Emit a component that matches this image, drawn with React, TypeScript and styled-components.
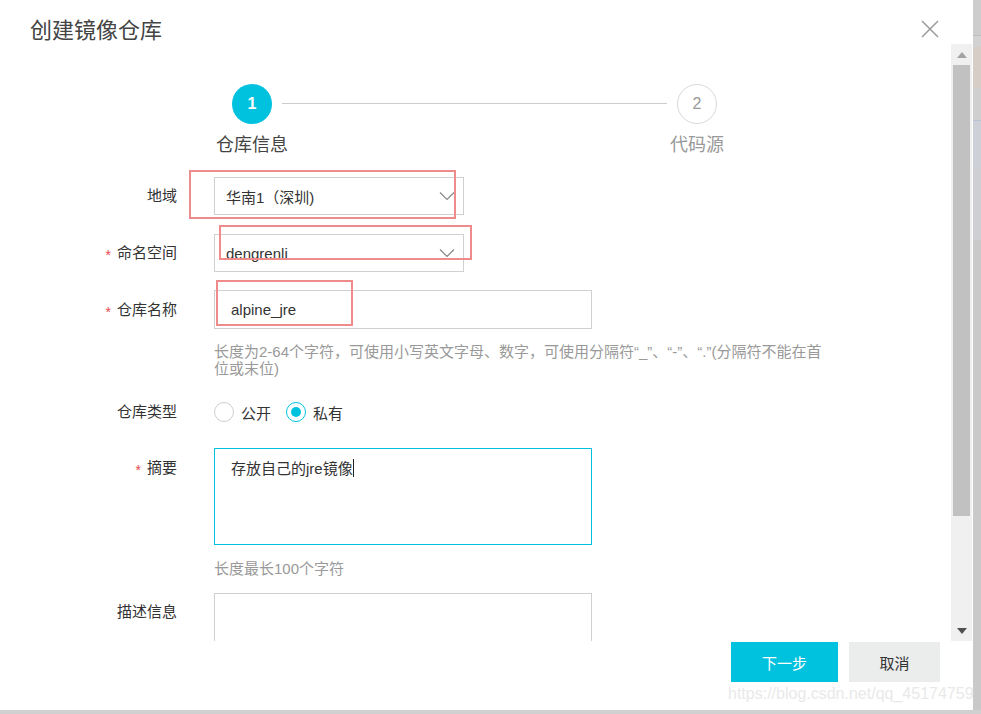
import React from "react";
import styled, { createGlobalStyle } from "styled-components";

const Global = createGlobalStyle`
  html, body { margin: 0; padding: 0; overflow: hidden; }
  body { font-family: "Liberation Sans", "Noto Sans CJK SC", sans-serif; }
  * { box-sizing: border-box; }
`;

const CYAN = "#00c1de";
const FONT = `"Liberation Sans", "Noto Sans CJK SC", sans-serif`;

const Page = styled.div`
  width: 981px;
  height: 714px;
  display: flex;
  flex-direction: column;
  background: #d0d0d0;
`;

const TopRow = styled.div`
  display: flex;
  height: 710px;
`;

const BottomStrip = styled.div`
  height: 4px;
  background: #d0d0d0;
`;

const BgStrip = styled.div`
  width: 8px;
  display: flex;
  flex-direction: column;
  background: #c9c9c9;
`;

const BgBlock = styled.div<{ $h: number; $c: string; $border?: string }>`
  height: ${(p) => p.$h}px;
  background: ${(p) => p.$c};
  border-top: ${(p) => p.$border || "none"};
  flex-shrink: 0;
`;

const Dialog = styled.div`
  width: 973px;
  height: 710px;
  background: #fff;
  display: flex;
  flex-direction: column;
  position: relative;
  font-family: ${FONT};
`;

const Header = styled.div`
  height: 44px;
  padding: 16px 34px 0 30px;
  display: flex;
  justify-content: space-between;
  align-items: flex-start;
`;

const Title = styled.div`
  font-size: 22px;
  line-height: 30px;
  color: #444;
`;

const CloseBtn = styled.div`
  width: 18px;
  height: 18px;
  margin-top: 4px;
  display: flex;
`;

const Body = styled.div`
  flex: 1;
  display: flex;
  min-height: 0;
`;

const Content = styled.div`
  flex: 1;
  position: relative;
  overflow: hidden;
  padding-top: 40px;
`;

const Scrollbar = styled.div`
  width: 21px;
  margin-right: 1px;
  background: #f0f0f0;
  display: flex;
  flex-direction: column;
  align-items: center;
`;

const ArrowBox = styled.div`
  height: 21px;
  width: 100%;
  display: flex;
  align-items: center;
  justify-content: center;
`;

const Thumb = styled.div`
  width: 17px;
  height: 451px;
  background: #c1c1c1;
`;

const ScrollSpacer = styled.div`
  flex: 1;
`;

const Steps = styled.div`
  display: flex;
  align-items: flex-start;
  padding-left: 232px;
`;

const StepItem = styled.div`
  width: 40px;
  display: flex;
  flex-direction: column;
  align-items: center;
`;

const StepCircle = styled.div<{ $active?: boolean }>`
  width: 40px;
  height: 40px;
  border-radius: 50%;
  display: flex;
  align-items: center;
  justify-content: center;
  font-size: 16px;
  font-weight: ${(p) => (p.$active ? 700 : 400)};
  background: ${(p) => (p.$active ? CYAN : "#fff")};
  color: ${(p) => (p.$active ? "#fff" : "#999")};
  border: ${(p) => (p.$active ? "none" : "1px solid #d9d9d9")};
`;

const StepLabel = styled.div<{ $active?: boolean }>`
  margin-top: 9px;
  font-size: 18px;
  line-height: 24px;
  white-space: nowrap;
  color: ${(p) => (p.$active ? "#444" : "#999")};
`;

const Connector = styled.div`
  width: 385px;
  height: 1px;
  background: #cccccc;
  margin: 19px 10px 0;
`;

const Form = styled.div`
  margin-top: 20px;
  display: flex;
  flex-direction: column;
`;

const FormItem = styled.div<{ $mb: number; $top?: boolean }>`
  display: grid;
  grid-template-columns: 177px 1fr;
  column-gap: 37px;
  align-items: ${(p) => (p.$top ? "start" : "center")};
  margin-bottom: ${(p) => p.$mb}px;
`;

const Label = styled.div<{ $pt?: number }>`
  text-align: right;
  font-size: 15px;
  color: #333;
  line-height: 20px;
  padding-top: ${(p) => p.$pt || 0}px;
  white-space: nowrap;
`;

const Star = styled.span`
  color: #e5484d;
  margin-right: 6px;
  font-size: 14px;
  position: relative;
  top: 2px;
`;

const Field = styled.div`
  display: flex;
  flex-direction: column;
`;

const Select = styled.div`
  width: 250px;
  height: 38px;
  border: 1px solid #d0d0d0;
  display: flex;
  align-items: center;
  justify-content: space-between;
  padding: 0 8px 0 11px;
  font-size: 15px;
  color: #333;
`;

const Input = styled.div`
  width: 378px;
  height: 39px;
  border: 1px solid #d0d0d0;
  display: flex;
  align-items: center;
  padding: 0 16px;
  font-size: 15px;
  color: #333;
`;

const TextArea = styled.div<{ $focus?: boolean; $h: number }>`
  width: 378px;
  height: ${(p) => p.$h}px;
  border: 1px solid ${(p) => (p.$focus ? CYAN : "#d0d0d0")};
  padding: 10px 16px;
  font-size: 15px;
  line-height: 20px;
  color: #333;
`;

const Caret = styled.span`
  display: inline-block;
  width: 1px;
  height: 18px;
  background: #222;
  vertical-align: -3px;
`;

const Help = styled.div<{ $mt: number }>`
  margin-top: ${(p) => p.$mt}px;
  width: 612px;
  font-size: 15px;
  line-height: 17px;
  color: #999;
`;

const RadioGroup = styled.div`
  display: flex;
  align-items: center;
  height: 20px;
`;

const RadioOption = styled.div`
  display: flex;
  align-items: center;
  margin-right: 15px;
  font-size: 15px;
  color: #333;
`;

const RadioDot = styled.span<{ $checked?: boolean }>`
  width: 20px;
  height: 20px;
  border-radius: 50%;
  border: ${(p) => (p.$checked ? `1.5px solid ${CYAN}` : "1px solid #cfcfcf")};
  margin-right: 7px;
  display: flex;
  align-items: center;
  justify-content: center;
  &::after {
    content: "";
    display: ${(p) => (p.$checked ? "block" : "none")};
    width: 10px;
    height: 10px;
    border-radius: 50%;
    background: ${CYAN};
  }
`;

const Annot = styled.div`
  position: absolute;
  border: 2px solid #f08b8c;
  pointer-events: none;
`;

const Footer = styled.div`
  height: 69px;
  display: flex;
  justify-content: flex-end;
  align-items: flex-start;
  gap: 11px;
  padding: 1px 33px 0 0;
`;

const Button = styled.div<{ $primary?: boolean; $w: number }>`
  width: ${(p) => p.$w}px;
  height: 40px;
  display: flex;
  align-items: center;
  justify-content: center;
  font-size: 15px;
  background: ${(p) => (p.$primary ? CYAN : "#ebecec")};
  color: ${(p) => (p.$primary ? "#fff" : "#333")};
`;

const Watermark = styled.div`
  position: absolute;
  left: 728px;
  top: 684px;
  font-family: "Liberation Sans", sans-serif;
  font-size: 16px;
  line-height: 20px;
  color: #e9e9e9;
  white-space: nowrap;
`;

const Chevron = () => (
  <svg width="16" height="10" viewBox="0 0 16 10">
    <polyline points="1,1.5 8,8.5 15,1.5" fill="none" stroke="#888" strokeWidth="1.2" />
  </svg>
);

export default function App() {
  return (
    <>
      <Global />
      <Page>
        <TopRow>
          <Dialog>
            <Header>
              <Title>创建镜像仓库</Title>
              <CloseBtn>
                <svg width="18" height="18" viewBox="0 0 18 18">
                  <path d="M1 1 L17 17 M17 1 L1 17" stroke="#9a9a9a" strokeWidth="1.5" fill="none" />
                </svg>
              </CloseBtn>
            </Header>
            <Body>
              <Content>
                <Steps>
                  <StepItem>
                    <StepCircle $active>1</StepCircle>
                    <StepLabel $active>仓库信息</StepLabel>
                  </StepItem>
                  <Connector />
                  <StepItem>
                    <StepCircle>2</StepCircle>
                    <StepLabel>代码源</StepLabel>
                  </StepItem>
                </Steps>
                <Form>
                  <FormItem $mb={19}>
                    <Label>地域</Label>
                    <Select>
                      <span>华南1（深圳)</span>
                      <Chevron />
                    </Select>
                  </FormItem>
                  <FormItem $mb={18}>
                    <Label>
                      <Star>*</Star>命名空间
                    </Label>
                    <Select>
                      <span>dengrenli</span>
                      <Chevron />
                    </Select>
                  </FormItem>
                  <FormItem $mb={25} $top>
                    <Label $pt={10}>
                      <Star>*</Star>仓库名称
                    </Label>
                    <Field>
                      <Input>alpine_jre</Input>
                      <Help $mt={14}>
                        长度为2-64个字符，可使用小写英文字母、数字，可使用分隔符“_”、“-”、“.”(分隔符不能在首位或末位)
                      </Help>
                    </Field>
                  </FormItem>
                  <FormItem $mb={26}>
                    <Label>仓库类型</Label>
                    <RadioGroup>
                      <RadioOption>
                        <RadioDot />
                        公开
                      </RadioOption>
                      <RadioOption>
                        <RadioDot $checked />
                        私有
                      </RadioOption>
                    </RadioGroup>
                  </FormItem>
                  <FormItem $mb={16} $top>
                    <Label $pt={10}>
                      <Star>*</Star>摘要
                    </Label>
                    <Field>
                      <TextArea $focus $h={97}>
                        存放自己的jre镜像
                        <Caret />
                      </TextArea>
                      <Help $mt={15}>长度最长100个字符</Help>
                    </Field>
                  </FormItem>
                  <FormItem $mb={0} $top>
                    <Label $pt={9}>描述信息</Label>
                    <TextArea $h={100} />
                  </FormItem>
                </Form>
                <Annot style={{ left: 189, top: 126, width: 267, height: 49 }} />
                <Annot style={{ left: 219, top: 181, width: 253, height: 35 }} />
                <Annot style={{ left: 216, top: 236, width: 137, height: 46 }} />
              </Content>
              <Scrollbar>
                <ArrowBox>
                  <svg width="10" height="6" viewBox="0 0 10 6">
                    <polygon points="0,6 10,6 5,0" fill="#a3a3a3" />
                  </svg>
                </ArrowBox>
                <Thumb />
                <ScrollSpacer />
                <ArrowBox>
                  <svg width="10" height="6" viewBox="0 0 10 6">
                    <polygon points="0,0 10,0 5,6" fill="#505050" />
                  </svg>
                </ArrowBox>
              </Scrollbar>
            </Body>
            <Footer>
              <Button $primary $w={107}>下一步</Button>
              <Button $w={91}>取消</Button>
            </Footer>
            <Watermark>https://blog.csdn.net/qq_45174759</Watermark>
          </Dialog>
          <BgStrip>
            <BgBlock $h={35} $c="#cdcdcd" />
            <BgBlock $h={12} $c="#d2d2d2" $border="1px solid #bdbdbd" />
            <BgBlock $h={41} $c="#d6cec6" />
            <BgBlock $h={32} $c="#cfcfcf" />
            <BgBlock $h={47} $c="#cdd0d6" $border="1px solid #b7c3d6" />
            <BgBlock $h={73} $c="#cdcfd2" />
          </BgStrip>
        </TopRow>
        <BottomStrip />
      </Page>
    </>
  );
}
